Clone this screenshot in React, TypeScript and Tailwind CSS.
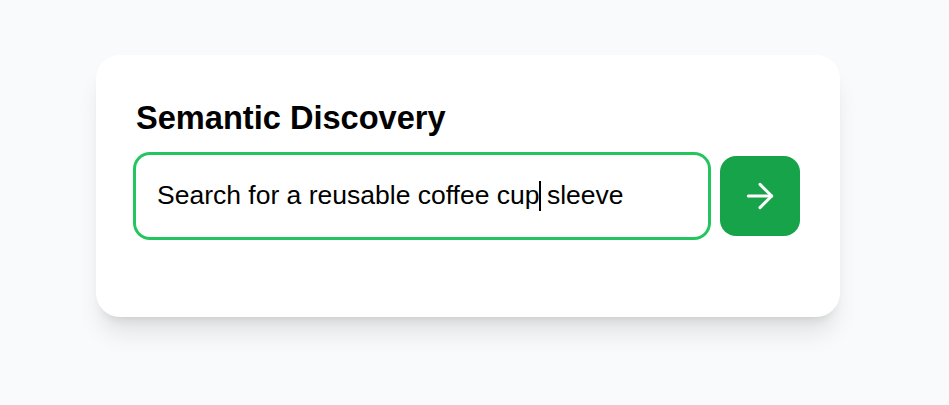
import { ArrowRight } from "lucide-react";

export default function App() {
  return (
    <div className="min-h-[405px] bg-[#f9fafb] pt-[55px] pl-[96px] font-['Liberation_Sans',Arial,sans-serif]">
      <div className="w-[744px] rounded-[24px] bg-white px-10 pt-[42px] pb-20 shadow-[0_20px_25px_-5px_rgb(0_0_0/0.1),0_8px_10px_-6px_rgb(0_0_0/0.1)]">
        <h1 className="text-[32.6px] font-bold leading-[42px] text-black">
          Semantic Discovery
        </h1>

        <div className="mt-4 flex items-center gap-3">
          {/* Search field (focused) */}
          <div className="flex h-[82px] flex-1 items-center rounded-[14px] pl-[21px] text-[26.5px] text-black ring-[3px] ring-[#22c55e]">
            <span>Search for a reusable coffee cup</span>
            <span className="relative inline-block h-[30px] w-0">
              <span className="absolute left-[-1px] top-0 h-[30px] w-[2px] bg-black" />
            </span>
            <span className="whitespace-pre"> sleeve</span>
          </div>

          <button
            type="button"
            className="flex size-20 shrink-0 items-center justify-center rounded-[16px] bg-[#16a34a] text-white"
          >
            <ArrowRight size={40} strokeWidth={1.8} />
          </button>
        </div>
      </div>
    </div>
  );
}
